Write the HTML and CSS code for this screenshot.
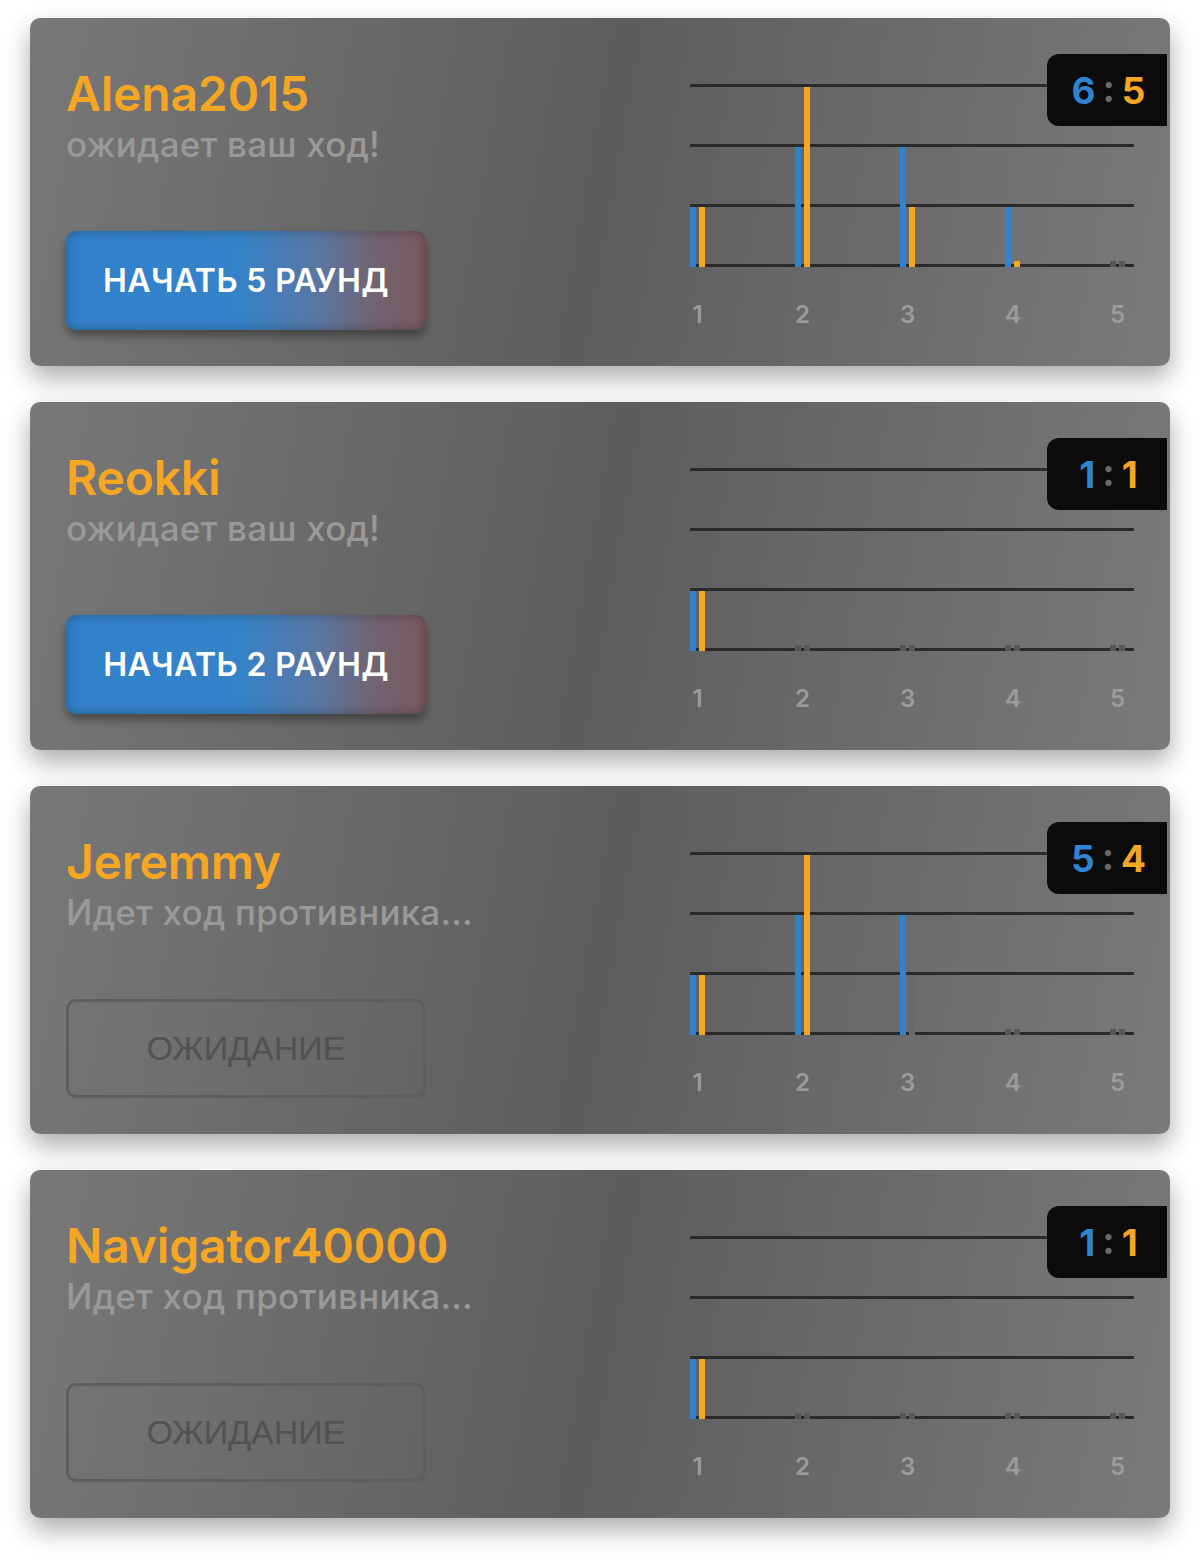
FILE: index.html
```html
<!DOCTYPE html>
<html lang="ru">
<head>
<meta charset="utf-8">
<title>Игры</title>
<link rel="stylesheet" href="styles.css">
</head>
<body>
<div class="list">

  <div class="card">
    <div class="info">
      <div class="name">Alena2015</div>
      <div class="status">ожидает ваш ход!</div>
      <button class="btn primary">НАЧАТЬ 5 РАУНД</button>
    </div>
    <div class="chart">
      <div class="plot">
        <div class="grid"><span></span><span></span><span></span><span></span></div>
        <div class="bars">
          <div class="grp"><i class="bar blue v1"></i><i class="bar orange v1"></i></div>
          <div class="grp"><i class="bar blue v2"></i><i class="bar orange v3"></i></div>
          <div class="grp"><i class="bar blue v2"></i><i class="bar orange v1"></i></div>
          <div class="grp"><i class="bar blue v1"></i><i class="bar orange v0"></i></div>
          <div class="grp"><i class="bar stub"></i><i class="bar stub"></i></div>
        </div>
      </div>
      <div class="labels"><span>1</span><span>2</span><span>3</span><span>4</span><span>5</span></div>
    </div>
    <div class="score"><span class="sb">6</span><span class="colon">:</span><span class="so">5</span></div>
  </div>

  <div class="card">
    <div class="info">
      <div class="name">Reokki</div>
      <div class="status">ожидает ваш ход!</div>
      <button class="btn primary">НАЧАТЬ 2 РАУНД</button>
    </div>
    <div class="chart">
      <div class="plot">
        <div class="grid"><span></span><span></span><span></span><span></span></div>
        <div class="bars">
          <div class="grp"><i class="bar blue v1"></i><i class="bar orange v1"></i></div>
          <div class="grp"><i class="bar stub"></i><i class="bar stub"></i></div>
          <div class="grp"><i class="bar stub"></i><i class="bar stub"></i></div>
          <div class="grp"><i class="bar stub"></i><i class="bar stub"></i></div>
          <div class="grp"><i class="bar stub"></i><i class="bar stub"></i></div>
        </div>
      </div>
      <div class="labels"><span>1</span><span>2</span><span>3</span><span>4</span><span>5</span></div>
    </div>
    <div class="score"><span class="sb">1</span><span class="colon">:</span><span class="so">1</span></div>
  </div>

  <div class="card">
    <div class="info">
      <div class="name">Jeremmy</div>
      <div class="status">Идет ход противника...</div>
      <button class="btn waiting" disabled>ОЖИДАНИЕ</button>
    </div>
    <div class="chart">
      <div class="plot">
        <div class="grid"><span></span><span></span><span></span><span></span></div>
        <div class="bars">
          <div class="grp"><i class="bar blue v1"></i><i class="bar orange v1"></i></div>
          <div class="grp"><i class="bar blue v2"></i><i class="bar orange v3"></i></div>
          <div class="grp"><i class="bar blue v2"></i><i class="bar pending v1"></i></div>
          <div class="grp"><i class="bar stub"></i><i class="bar stub"></i></div>
          <div class="grp"><i class="bar stub"></i><i class="bar stub"></i></div>
        </div>
      </div>
      <div class="labels"><span>1</span><span>2</span><span>3</span><span>4</span><span>5</span></div>
    </div>
    <div class="score"><span class="sb">5</span><span class="colon">:</span><span class="so">4</span></div>
  </div>

  <div class="card">
    <div class="info">
      <div class="name">Navigator40000</div>
      <div class="status">Идет ход противника...</div>
      <button class="btn waiting" disabled>ОЖИДАНИЕ</button>
    </div>
    <div class="chart">
      <div class="plot">
        <div class="grid"><span></span><span></span><span></span><span></span></div>
        <div class="bars">
          <div class="grp"><i class="bar blue v1"></i><i class="bar orange v1"></i></div>
          <div class="grp"><i class="bar stub"></i><i class="bar stub"></i></div>
          <div class="grp"><i class="bar stub"></i><i class="bar stub"></i></div>
          <div class="grp"><i class="bar stub"></i><i class="bar stub"></i></div>
          <div class="grp"><i class="bar stub"></i><i class="bar stub"></i></div>
        </div>
      </div>
      <div class="labels"><span>1</span><span>2</span><span>3</span><span>4</span><span>5</span></div>
    </div>
    <div class="score"><span class="sb">1</span><span class="colon">:</span><span class="so">1</span></div>
  </div>

</div>
</body>
</html>
```

FILE: styles.css
```css
html, body {
  margin: 0;
  padding: 0;
  background: #ffffff;
}

body {
  font-family: Inter, "Noto Sans", "Liberation Sans", sans-serif;
}

.list {
  padding: 18px 30px 42px;
  display: flex;
  flex-direction: column;
  gap: 36px;
}

.card {
  position: relative;
  display: flex;
  justify-content: space-between;
  height: 348px;
  box-sizing: border-box;
  padding: 0 36px;
  border-radius: 10px;
  background: linear-gradient(100deg, #787878 0%, #5d5d5d 50%, #7a7a7a 100%);
  box-shadow: 0 12px 26px rgba(0, 0, 0, 0.33);
}

.info {
  display: flex;
  flex-direction: column;
  align-items: flex-start;
  padding: 48px 0 36px;
}

.name {
  color: #f5a623;
  font-size: 48px;
  font-weight: 600;
  line-height: 56px;
  letter-spacing: -0.2px;
}

.status {
  color: #999999;
  font-size: 35px;
  font-weight: 500;
  line-height: 40px;
  margin-top: 2px;
  letter-spacing: 0.2px;
}

.btn {
  margin-top: auto;
  width: 360px;
  height: 99px;
  border-radius: 10px;
  box-sizing: border-box;
  cursor: pointer;
  padding: 0;
}

.btn.primary {
  border: none;
  color: #ffffff;
  font-family: Inter, "Noto Sans", sans-serif;
  font-size: 32px;
  font-weight: 600;
  letter-spacing: 0.4px;
  background: linear-gradient(90deg, #3281cc 0%, #3582c9 48%, #5a77a2 70%, #72636f 86%, #7b5a5f 100%);
  box-shadow: 0 6px 8px rgba(0, 0, 0, 0.35), inset 0 0 12px rgba(0, 0, 0, 0.28);
}

.btn.waiting {
  border: 3px solid #5e5e5e;
  background: transparent;
  color: #525252;
  font-family: "Liberation Sans", Arial, sans-serif;
  font-size: 34px;
  font-weight: 400;
  cursor: default;
}

.chart {
  width: 444px;
  padding-top: 66px;
}

.plot {
  display: grid;
  height: 183px;
}

.grid,
.bars {
  grid-area: 1 / 1;
}

.grid {
  display: flex;
  flex-direction: column;
  justify-content: space-between;
}

.grid span {
  display: block;
  height: 3px;
  background: #2a2a2a;
}

.bars {
  display: flex;
  align-items: flex-end;
  gap: 90px;
}

.grp {
  display: flex;
  align-items: flex-end;
  gap: 3px;
}

.bar {
  display: block;
  width: 6px;
}

.bar.blue { background: #3083d0; }
.bar.orange { background: #f5a623; }
.bar.pending { background: #686868; }
.bar.stub { background: #575757; height: 6px; }

.v0 { height: 6px; }
.v1 { height: 60px; }
.v2 { height: 120px; }
.v3 { height: 180px; }

.labels {
  display: flex;
  gap: 90px;
  margin-top: 34px;
}

.labels span {
  width: 15px;
  text-align: center;
  color: #9c9c9c;
  font-size: 24px;
  font-weight: 600;
  line-height: 28px;
}

.score {
  position: absolute;
  top: 36px;
  right: 3px;
  width: 120px;
  height: 72px;
  box-sizing: border-box;
  padding-left: 3px;
  border-radius: 12px 0 0 12px;
  background: #0b0b0b;
  display: flex;
  align-items: center;
  justify-content: center;
  font-size: 37px;
  font-weight: 700;
  line-height: 1;
}

.sb { color: #3083d0; }
.so { color: #f5a623; }
.colon {
  color: #6a6a6a;
  margin: 0 7px;
  position: relative;
  top: -2px;
}
```
